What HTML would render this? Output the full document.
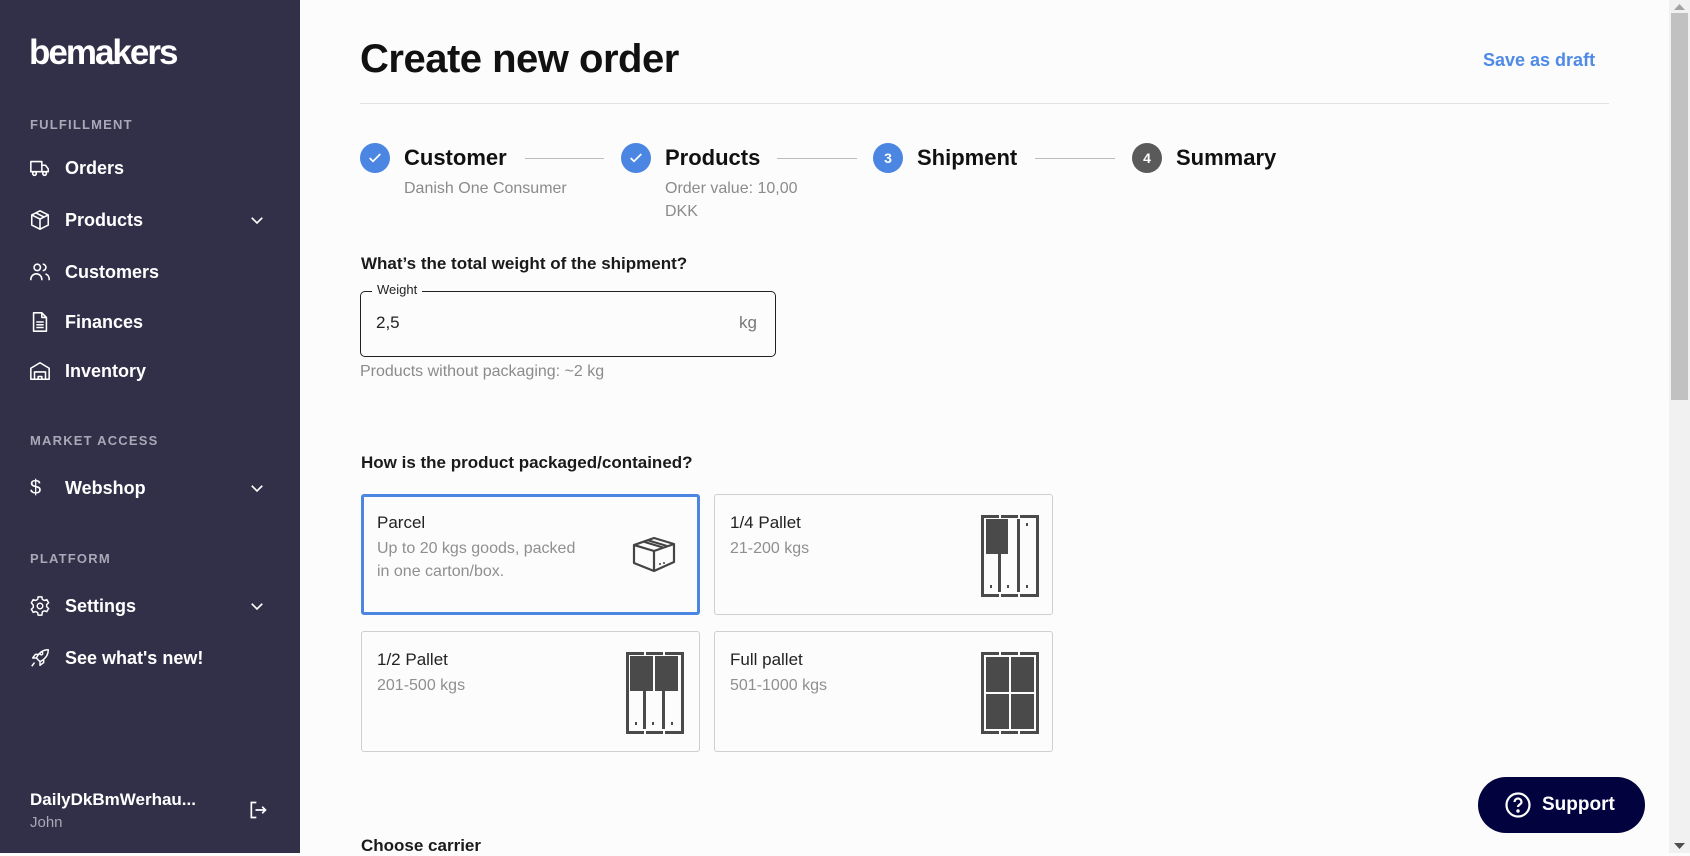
<!DOCTYPE html>
<html><head><meta charset="utf-8">
<style>
*{margin:0;padding:0;box-sizing:border-box}
html,body{width:1690px;height:853px;overflow:hidden;background:#fcfcfc;font-family:"Liberation Sans",Arial,sans-serif;color:#111}
.sb{position:absolute;left:0;top:0;width:300px;height:853px;background:#322f48;color:#fff}
.logo{position:absolute;left:29px;top:33px;font-size:35px;font-weight:bold;letter-spacing:-2px}
.sec{position:absolute;left:30px;font-size:13px;font-weight:bold;color:#a9a8b6;letter-spacing:1.2px}
.it{position:absolute;left:0;width:300px;height:30px;display:flex;align-items:center;font-size:18px;font-weight:bold}
.it svg.ic{position:absolute;left:29px;width:22px;height:22px}
.it span{position:absolute;left:65px}
.it .chev{position:absolute;left:248px;width:18px;height:18px}
.title{position:absolute;left:360px;top:37px;font-size:40px;font-weight:bold;letter-spacing:-0.5px}
.draft{position:absolute;left:1483px;top:50px;font-size:18px;font-weight:bold;color:#4e8ae6}
.hr{position:absolute;left:360px;top:103px;width:1249px;height:1px;background:#e2e2e2}
.circ{position:absolute;top:143px;width:30px;height:30px;border-radius:50%;background:#4a86e2;color:#fff;font-size:14px;font-weight:bold;display:flex;align-items:center;justify-content:center}
.stp{position:absolute;top:145px;font-size:22px;font-weight:bold;color:#111}
.ln{position:absolute;top:158px;height:1px;background:#bdbdbd}
.sub{position:absolute;font-size:16px;color:#8b8b8b;line-height:23px}
.q{position:absolute;left:361px;font-size:17px;font-weight:bold;color:#1a1a1a}
.inp{position:absolute;left:360px;top:291px;width:416px;height:66px;border:1.5px solid #222;border-radius:5px}
.lbl{position:absolute;left:372px;top:282px;font-size:13px;background:#fcfcfc;padding:0 5px;color:#222}
.card{position:absolute;width:339px;height:121px;border:1px solid #cfcfcf;border-radius:3px;background:#fcfcfc}
.card.sel{border:3px solid #4a86e2}
.ct{position:absolute;left:15px;top:18px;font-size:17px;color:#222}
.cs{position:absolute;left:15px;top:42px;font-size:16px;color:#8f8f8f;line-height:23px}
.card.sel .ct{left:13px;top:16px}.card.sel .cs{left:13px;top:40px}
.sup{position:absolute;left:1478px;top:777px;width:167px;height:56px;border-radius:28px;background:#02023f;color:#fff;font-size:19px;font-weight:bold;display:flex;align-items:center}
.scr{position:absolute;left:1669px;top:0;width:21px;height:853px;background:#f1f1f1}
.thumb{position:absolute;left:2px;top:13px;width:17px;height:387px;background:#c1c1c1}
</style></head><body>
<div class="sb">
<div class="logo">bemakers</div>
<div class="sec" style="top:117px">FULFILLMENT</div>
<div class="it" style="top:153px"><svg class="ic" viewBox="0 0 24 24" fill="none" stroke="#fff" stroke-width="1.7" stroke-linejoin="round"><path d="M2 5h12v11H2z M14 9h4l3 4v3h-7"/><circle cx="6" cy="18" r="2" fill="#322f48"/><circle cx="17" cy="18" r="2" fill="#322f48"/></svg><span>Orders</span></div>
<div class="it" style="top:205px"><svg class="ic" viewBox="0 0 24 24" fill="none" stroke="#fff" stroke-width="1.7" stroke-linejoin="round"><path d="M12 2l9 4.5v11L12 22l-9-4.5v-11z M3 6.5l9 4.5 9-4.5 M12 11v11 M7.5 4.3l9 4.5"/></svg><span>Products</span><svg class="chev" viewBox="0 0 24 24" fill="none" stroke="#fff" stroke-width="2.2"><path d="M5 9l7 7 7-7"/></svg></div>
<div class="it" style="top:257px"><svg class="ic" viewBox="0 0 24 24" fill="none" stroke="#fff" stroke-width="1.7"><circle cx="9" cy="7" r="3.5"/><path d="M2 21v-1a6 6 0 0112 0v1 M15 3.5a3.5 3.5 0 010 7 M18 14a6 6 0 014 6v1"/></svg><span>Customers</span></div>
<div class="it" style="top:307px"><svg class="ic" viewBox="0 0 24 24" fill="none" stroke="#fff" stroke-width="1.7" stroke-linejoin="round"><path d="M5 2h9l5 5v15H5z M14 2v5h5 M8 12h8 M8 15h8 M8 18h8"/></svg><span>Finances</span></div>
<div class="it" style="top:356px"><svg class="ic" viewBox="0 0 24 24" fill="none" stroke="#fff" stroke-width="1.7" stroke-linejoin="round"><path d="M2 21V9l10-6 10 6v12z M6 21v-8h12v8 M10 21v-3h4v3"/></svg><span>Inventory</span></div>
<div class="sec" style="top:433px">MARKET ACCESS</div>
<div class="it" style="top:473px"><span style="left:30px;font-weight:normal;font-size:20px">$</span><span>Webshop</span><svg class="chev" viewBox="0 0 24 24" fill="none" stroke="#fff" stroke-width="2.2"><path d="M5 9l7 7 7-7"/></svg></div>
<div class="sec" style="top:551px">PLATFORM</div>
<div class="it" style="top:591px"><svg class="ic" viewBox="0 0 24 24" fill="none" stroke="#fff" stroke-width="1.6"><circle cx="12" cy="12" r="3"/><path d="M10 2h4l.6 2.8 2.1 1.2 2.7-.9 2 3.4-2.1 1.9v2.4l2.1 1.9-2 3.4-2.7-.9-2.1 1.2L14 22h-4l-.6-2.8-2.1-1.2-2.7.9-2-3.4 2.1-1.9v-2.4L2.6 8.5l2-3.4 2.7.9 2.1-1.2z"/></svg><span>Settings</span><svg class="chev" viewBox="0 0 24 24" fill="none" stroke="#fff" stroke-width="2.2"><path d="M5 9l7 7 7-7"/></svg></div>
<div class="it" style="top:643px"><svg class="ic" viewBox="0 0 24 24" fill="none" stroke="#fff" stroke-width="1.6" stroke-linejoin="round"><path d="M21 3c-6 0-10 3-13 9l4 4c6-3 9-7 9-13z M8 12l-4 0 3-4h4 M12 16v4l4-3v-4 M6 17l-3 4 M15 7a1.5 1.5 0 100 .1"/></svg><span>See what's new!</span></div>
<div style="position:absolute;left:30px;top:790px;font-size:17px;font-weight:bold">DailyDkBmWerhau...</div>
<div style="position:absolute;left:30px;top:814px;font-size:15px;color:#a9a8b6">John</div>
<svg style="position:absolute;left:248px;top:800px" width="20" height="20" viewBox="0 0 24 24" fill="none" stroke="#fff" stroke-width="2"><path d="M10 3H4v18h6 M9 12h12 M17 8l4 4-4 4"/></svg>
</div>

<div class="title">Create new order</div>
<div class="draft">Save as draft</div>
<div class="hr"></div>

<div class="circ" style="left:360px"><svg width="16" height="16" viewBox="0 0 24 24" fill="none" stroke="#fff" stroke-width="2.5"><path d="M4 12l5 5 11-11"/></svg></div>
<div class="stp" style="left:404px">Customer</div>
<div class="ln" style="left:525px;width:79px"></div>
<div class="sub" style="left:404px;top:177px">Danish One Consumer</div>
<div class="circ" style="left:621px"><svg width="16" height="16" viewBox="0 0 24 24" fill="none" stroke="#fff" stroke-width="2.5"><path d="M4 12l5 5 11-11"/></svg></div>
<div class="stp" style="left:665px">Products</div>
<div class="ln" style="left:777px;width:80px"></div>
<div class="sub" style="left:665px;top:177px">Order value: 10,00<br>DKK</div>
<div class="circ" style="left:873px">3</div>
<div class="stp" style="left:917px">Shipment</div>
<div class="ln" style="left:1035px;width:80px"></div>
<div class="circ" style="left:1132px;background:#5a5a5a">4</div>
<div class="stp" style="left:1176px">Summary</div>

<div class="q" style="top:254px">What’s the total weight of the shipment?</div>
<div class="inp"></div>
<div class="lbl">Weight</div>
<div style="position:absolute;left:376px;top:313px;font-size:17px;color:#222">2,5</div>
<div style="position:absolute;left:739px;top:313px;font-size:17px;color:#777">kg</div>
<div class="sub" style="left:360px;top:360px">Products without packaging: ~2 kg</div>

<div class="q" style="top:453px">How is the product packaged/contained?</div>

<div class="card sel" style="left:361px;top:494px"><div class="ct">Parcel</div><div class="cs">Up to 20 kgs goods, packed<br>in one carton/box.</div>
<svg style="position:absolute;left:268px;top:36px" width="44" height="42" viewBox="0 0 44 42" fill="none" stroke="#444" stroke-width="2.2" stroke-linejoin="round"><path d="M2 12L22 5l20 6-20 7z M2 12v18l20 8V18 M42 11v18l-20 9 M11 8.5l20 6 M15 7l20 6"/><path d="M27 31h2 M31 30h2" stroke-width="1.6"/></svg></div>
<div class="card" style="left:714px;top:494px"><div class="ct">1/4 Pallet</div><div class="cs">21-200 kgs</div>
<svg style="position:absolute;left:266px;top:20px" width="58" height="82" viewBox="0 0 58 82"><g fill="#4a4a4a"><rect x="0" y="0" width="18" height="3"/><rect x="20" y="0" width="17" height="3"/><rect x="39" y="0" width="19" height="3"/><rect x="0" y="79" width="18" height="3"/><rect x="20" y="79" width="17" height="3"/><rect x="39" y="79" width="19" height="3"/><rect x="0" y="0" width="3" height="82"/><rect x="55" y="0" width="3" height="82"/><rect x="5" y="4" width="22" height="35"/><rect x="17" y="39" width="3" height="38"/><rect x="36" y="4" width="3" height="73"/><rect x="9" y="70" width="2" height="3"/><rect x="26" y="70" width="2" height="3"/><rect x="45" y="70" width="2" height="3"/><rect x="45" y="8" width="2" height="3"/></g></svg></div>
<div class="card" style="left:361px;top:631px"><div class="ct">1/2 Pallet</div><div class="cs">201-500 kgs</div>
<svg style="position:absolute;left:264px;top:20px" width="58" height="82" viewBox="0 0 58 82"><g fill="#4a4a4a"><rect x="0" y="0" width="18" height="3"/><rect x="20" y="0" width="17" height="3"/><rect x="39" y="0" width="19" height="3"/><rect x="0" y="79" width="18" height="3"/><rect x="20" y="79" width="17" height="3"/><rect x="39" y="79" width="19" height="3"/><rect x="0" y="0" width="3" height="82"/><rect x="55" y="0" width="3" height="82"/><rect x="4" y="4" width="23" height="35"/><rect x="29" y="4" width="23" height="35"/><rect x="17" y="39" width="3" height="38"/><rect x="36" y="39" width="3" height="38"/><rect x="9" y="70" width="2" height="3"/><rect x="26" y="70" width="2" height="3"/><rect x="45" y="70" width="2" height="3"/></g></svg></div>
<div class="card" style="left:714px;top:631px"><div class="ct">Full pallet</div><div class="cs">501-1000 kgs</div>
<svg style="position:absolute;left:266px;top:20px" width="58" height="82" viewBox="0 0 58 82"><g fill="#4a4a4a"><rect x="0" y="0" width="18" height="3"/><rect x="20" y="0" width="17" height="3"/><rect x="39" y="0" width="19" height="3"/><rect x="0" y="79" width="18" height="3"/><rect x="20" y="79" width="17" height="3"/><rect x="39" y="79" width="19" height="3"/><rect x="0" y="0" width="3" height="82"/><rect x="55" y="0" width="3" height="82"/><rect x="5" y="5" width="23" height="35"/><rect x="30" y="5" width="23" height="35"/><rect x="5" y="42" width="23" height="35"/><rect x="30" y="42" width="23" height="35"/></g></svg></div>

<div class="q" style="top:836px">Choose carrier</div>

<div class="sup"><svg style="margin-left:27px;margin-right:11px" width="26" height="26" viewBox="0 0 26 26" fill="none" stroke="#fff" stroke-width="2.2"><circle cx="13" cy="13" r="11.5"/><path d="M9.5 10a3.5 3.5 0 117 0c0 2.5-3.5 2.5-3.5 5" /><circle cx="13" cy="19" r="0.6" fill="#fff"/></svg>Support</div>

<div class="scr"><div class="thumb"></div>
<svg style="position:absolute;left:5px;top:4px" width="11" height="6"><path d="M0 6L5.5 0 11 6z" fill="#a3a3a3"/></svg>
<svg style="position:absolute;left:5px;top:843px" width="11" height="6"><path d="M0 0L5.5 6 11 0z" fill="#505050"/></svg></div>
</body></html>
